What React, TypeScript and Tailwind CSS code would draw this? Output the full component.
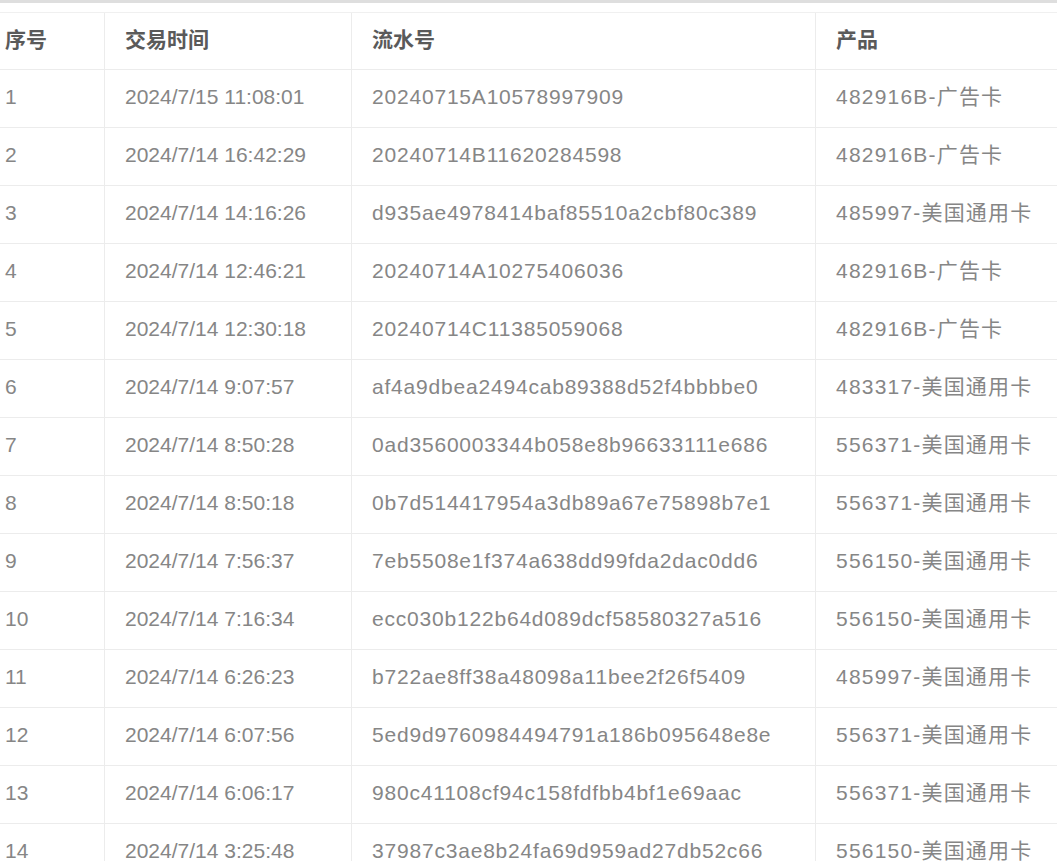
const rows: [string, string, string, string][] = [
    ['1', '2024/7/15 11:08:01', '20240715A10578997909', '482916B-广告卡'],
    ['2', '2024/7/14 16:42:29', '20240714B11620284598', '482916B-广告卡'],
    ['3', '2024/7/14 14:16:26', 'd935ae4978414baf85510a2cbf80c389', '485997-美国通用卡'],
    ['4', '2024/7/14 12:46:21', '20240714A10275406036', '482916B-广告卡'],
    ['5', '2024/7/14 12:30:18', '20240714C11385059068', '482916B-广告卡'],
    ['6', '2024/7/14 9:07:57', 'af4a9dbea2494cab89388d52f4bbbbe0', '483317-美国通用卡'],
    ['7', '2024/7/14 8:50:28', '0ad3560003344b058e8b96633111e686', '556371-美国通用卡'],
    ['8', '2024/7/14 8:50:18', '0b7d514417954a3db89a67e75898b7e1', '556371-美国通用卡'],
    ['9', '2024/7/14 7:56:37', '7eb5508e1f374a638dd99fda2dac0dd6', '556150-美国通用卡'],
    ['10', '2024/7/14 7:16:34', 'ecc030b122b64d089dcf58580327a516', '556150-美国通用卡'],
    ['11', '2024/7/14 6:26:23', 'b722ae8ff38a48098a11bee2f26f5409', '485997-美国通用卡'],
    ['12', '2024/7/14 6:07:56', '5ed9d9760984494791a186b095648e8e', '556371-美国通用卡'],
    ['13', '2024/7/14 6:06:17', '980c41108cf94c158fdfbb4bf1e69aac', '556371-美国通用卡'],
    ['14', '2024/7/14 3:25:48', '37987c3ae8b24fa69d959ad27db52c66', '556150-美国通用卡'],
];

const cols = 'grid grid-cols-[120px_247px_464px_260px]';

const App = () => {
    return (
        <div
            className="h-[861px] w-[1057px] overflow-hidden bg-white"
            style={{ fontFamily: '"Liberation Sans", "Noto Sans CJK SC", sans-serif' }}
        >
            <div className="h-[3px] bg-[#dedede]" />
            <div className="h-[9px]" />
            <div className="ml-[-15px] w-[1091px] border-t border-[#f0f0f0]">
                {/* header */}
                <div className={`${cols} h-[57px] border-b border-[#ececec] text-[21px] font-bold text-[#5a5a5a]`}>
                    <div className="flex items-center border-r border-[#ececec] pb-[2px] pl-5">序号</div>
                    <div className="flex items-center border-r border-[#ececec] pb-[2px] pl-5">交易时间</div>
                    <div className="flex items-center border-r border-[#ececec] pb-[2px] pl-5">流水号</div>
                    <div className="flex items-center pb-[2px] pl-5">产品</div>
                </div>
                {rows.map((r) => (
                    <div
                        key={r[0]}
                        className={`${cols} h-[58px] border-b border-[#ececec] text-[21px] text-[#868686]`}
                    >
                        <div className="flex items-center border-r border-[#ececec] pb-[4px] pl-5">{r[0]}</div>
                        <div className="flex items-center border-r border-[#ececec] pb-[4px] pl-5">{r[1]}</div>
                        <div className="flex items-center border-r border-[#ececec] pb-[4px] pl-5 tracking-[0.8px]">{r[2]}</div>
                        <div className="flex items-center pb-[4px] pl-5 tracking-[1.2px]">{r[3]}</div>
                    </div>
                ))}
            </div>
        </div>
    );
};

export default App;
